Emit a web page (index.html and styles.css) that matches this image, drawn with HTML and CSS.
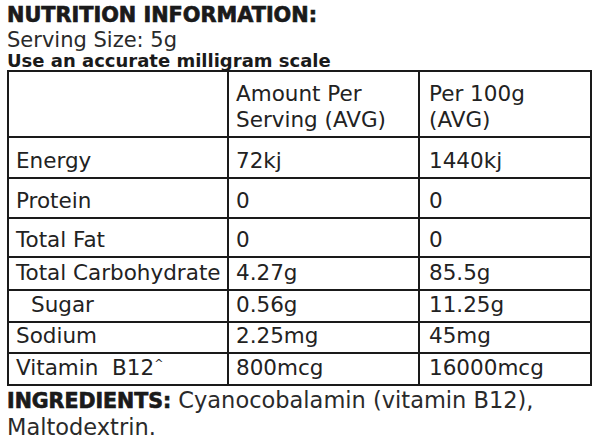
FILE: index.html
```html
<!DOCTYPE html>
<html>
<head>
<meta charset="utf-8">
<link rel="stylesheet" href="styles.css">
</head>
<body>
<div class="label">
  <h1 class="title">NUTRITION INFORMATION:</h1>
  <p class="serving">Serving Size: 5g</p>
  <p class="note">Use an accurate milligram scale</p>
  <table class="facts">
    <colgroup>
      <col class="c1"><col class="c2"><col class="c3">
    </colgroup>
    <tr class="r-head"><td></td><td>Amount Per<br>Serving (AVG)</td><td>Per 100g<br>(AVG)</td></tr>
    <tr class="r-41"><td>Energy</td><td>72kj</td><td>1440kj</td></tr>
    <tr class="r-40"><td>Protein</td><td>0</td><td>0</td></tr>
    <tr class="r-39"><td>Total Fat</td><td>0</td><td>0</td></tr>
    <tr class="r-33"><td>Total Carbohydrate</td><td>4.27g</td><td>85.5g</td></tr>
    <tr class="r-32"><td class="sub">Sugar</td><td>0.56g</td><td>11.25g</td></tr>
    <tr class="r-31"><td>Sodium</td><td>2.25mg</td><td>45mg</td></tr>
    <tr class="r-32"><td>Vitamin &nbsp;B12<sup class="caret">^</sup></td><td>800mcg</td><td>16000mcg</td></tr>
  </table>
  <p class="ingredients"><span class="ing-label">INGREDIENTS:</span> Cyanocobalamin (vitamin B12),<br>Maltodextrin.</p>
</div>
</body>
</html>
```
FILE: styles.css
```css
html, body {
  margin: 0;
  padding: 0;
  background: #ffffff;
}
body {
  font-family: "DejaVu Sans", "Liberation Sans", sans-serif;
  color: #1e1e1e;
}
.label {
  padding: 3px 0 0 7px;
}
.title {
  margin: 0;
  font-size: 20.8px;
  line-height: 25px;
  font-weight: 700;
  color: #1a1a1a;
  -webkit-text-stroke: 0.7px #1a1a1a;
}
.serving {
  margin: 0;
  font-size: 21px;
  line-height: 24px;
  color: #2a2a2a;
}
.note {
  margin: 0;
  font-size: 18px;
  line-height: 18px;
  font-weight: 700;
  color: #1a1a1a;
}
.facts {
  border-collapse: separate;
  border-spacing: 0;
  table-layout: fixed;
  width: 585px;
  border-top: 2px solid #1a1a1a;
  border-left: 2px solid #1a1a1a;
}
.c1 { width: 220px; }
.c2 { width: 191px; }
.c3 { width: 172px; }
.facts td {
  box-sizing: border-box;
  border-right: 2px solid #1a1a1a;
  border-bottom: 2px solid #1a1a1a;
  padding: 0 4px 3px 7px;
  vertical-align: bottom;
  font-size: 21.5px;
  line-height: 26px;
  color: #222;
  white-space: nowrap;
}
.facts td:nth-child(3) {
  padding-left: 9px;
}
.facts td.sub {
  padding-left: 22px;
}
.r-head td { height: 66px; }
.r-41 td { height: 41px; }
.r-40 td { height: 40px; }
.r-39 td { height: 39px; }
.r-33 td { height: 33px; }
.r-32 td { height: 32px; }
.r-31 td { height: 31px; }
.caret {
  font-size: 11px;
  vertical-align: top;
  line-height: 1;
  position: relative;
  top: 3px;
}
.ingredients {
  margin: 1px 0 0 0;
  font-size: 22.5px;
  line-height: 26px;
  color: #2a2a2a;
}
.ing-label {
  font-size: 20.5px;
  font-weight: 700;
  color: #1a1a1a;
  -webkit-text-stroke: 0.7px #1a1a1a;
}
```
